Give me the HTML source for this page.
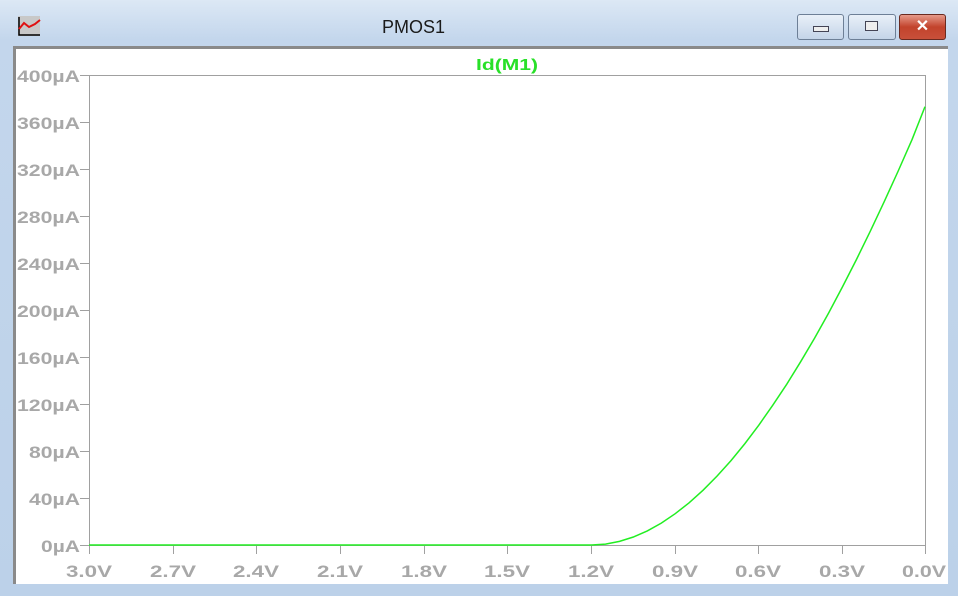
<!DOCTYPE html>
<html><head><meta charset="utf-8"><style>
body{margin:0;width:958px;height:596px;overflow:hidden;background:#c9dbee;font-family:"Liberation Sans",sans-serif}
.frame{position:absolute;left:0;top:0;width:958px;height:596px;background:linear-gradient(#dce8f5,#c3d6ec 40px,#bcd1e9);}
.title{position:absolute;left:382px;top:17px;font-size:18px;color:#1a1a1a}
.btn{position:absolute;top:14px;height:24px;border:1px solid #6d7f96;border-radius:3px;background:linear-gradient(#e9f0f8,#c4d4e8)}
.client{position:absolute;left:13px;top:46px;width:935px;height:538px;background:#fff;border-top:3px solid #8a8a8a;border-left:3px solid #8a8a8a;box-sizing:border-box}
svg{position:absolute;left:0;top:0}
</style></head><body>
<div class="frame"></div>
<svg width="30" height="30" style="left:16px;top:14px"><rect x="2" y="2" width="22" height="20" fill="#c8c8c8"/><path d="M3 3V21H24" stroke="#000" fill="none" stroke-width="1.5"/><path d="M3 15l5-6 5 4 6-3 5-4" stroke="#e01010" stroke-width="2" fill="none"/></svg>
<div class="title">PMOS1</div>
<div class="btn" style="left:797px;width:45px"><div style="position:absolute;left:15px;top:11px;width:14px;height:4px;background:#eee;border:1px solid #445"></div></div>
<div class="btn" style="left:848px;width:46px"><div style="position:absolute;left:16px;top:6px;width:11px;height:8px;background:#eee;border:1px solid #445"></div></div>
<div class="btn" style="left:899px;width:45px;background:linear-gradient(#e69a8a,#c2432c 50%,#c8503a);border-color:#6a2a20;color:#fff;font-weight:bold;font-size:16px;text-align:center;line-height:24px">✕</div>
<div class="client"></div>
<svg width="958" height="596" font-family="Liberation Sans" font-size="17" font-weight="bold" fill="#a8a8a8">
<rect x="89.5" y="75.5" width="836" height="470" fill="none" stroke="#a0a0a0"/>
<text x="476" y="70" fill="#28e028" font-size="16" textLength="62" lengthAdjust="spacingAndGlyphs">Id(M1)</text>
<g stroke="#a0a0a0" stroke-width="1">
<path d="M80 75.5H89M80 122.5H89M80 169.5H89M80 216.5H89M80 263.5H89M80 310.5H89M80 357.5H89M80 404.5H89M80 451.5H89M80 498.5H89M80 545.5H89"/>
<path d="M89.5 545V554M173.5 545V554M256.5 545V554M340.5 545V554M424.5 545V554M507.5 545V554M591.5 545V554M675.5 545V554M758.5 545V554M842.5 545V554M925.5 545V554"/>
</g>
<g lengthAdjust="spacingAndGlyphs">
<text x="17" y="82" textLength="63" lengthAdjust="spacingAndGlyphs">400µA</text>
<text x="17" y="129" textLength="63" lengthAdjust="spacingAndGlyphs">360µA</text>
<text x="17" y="176" textLength="63" lengthAdjust="spacingAndGlyphs">320µA</text>
<text x="17" y="223" textLength="63" lengthAdjust="spacingAndGlyphs">280µA</text>
<text x="17" y="270" textLength="63" lengthAdjust="spacingAndGlyphs">240µA</text>
<text x="17" y="317" textLength="63" lengthAdjust="spacingAndGlyphs">200µA</text>
<text x="17" y="364" textLength="63" lengthAdjust="spacingAndGlyphs">160µA</text>
<text x="17" y="411" textLength="63" lengthAdjust="spacingAndGlyphs">120µA</text>
<text x="29" y="458" textLength="51" lengthAdjust="spacingAndGlyphs">80µA</text>
<text x="29" y="505" textLength="51" lengthAdjust="spacingAndGlyphs">40µA</text>
<text x="41" y="552" textLength="39" lengthAdjust="spacingAndGlyphs">0µA</text>
</g>
<g>
<text x="66" y="577" textLength="46" lengthAdjust="spacingAndGlyphs">3.0V</text>
<text x="150" y="577" textLength="46" lengthAdjust="spacingAndGlyphs">2.7V</text>
<text x="233" y="577" textLength="46" lengthAdjust="spacingAndGlyphs">2.4V</text>
<text x="317" y="577" textLength="46" lengthAdjust="spacingAndGlyphs">2.1V</text>
<text x="401" y="577" textLength="46" lengthAdjust="spacingAndGlyphs">1.8V</text>
<text x="484" y="577" textLength="46" lengthAdjust="spacingAndGlyphs">1.5V</text>
<text x="568" y="577" textLength="46" lengthAdjust="spacingAndGlyphs">1.2V</text>
<text x="652" y="577" textLength="46" lengthAdjust="spacingAndGlyphs">0.9V</text>
<text x="735" y="577" textLength="46" lengthAdjust="spacingAndGlyphs">0.6V</text>
<text x="819" y="577" textLength="46" lengthAdjust="spacingAndGlyphs">0.3V</text>
<text x="902" y="577" textLength="44" lengthAdjust="spacingAndGlyphs">0.0V</text>
</g>
<polyline fill="none" stroke="#22ee22" stroke-width="1.5" points="89,545 591.6,545 605.5,544.1 619.5,541.4 633.4,537 647.3,530.9 661.3,523.1 675.2,513.7 689.1,502.8 703.1,490.2 717,476.1 731,460.6 744.9,443.6 758.8,425.2 772.7,405.3 786.7,384.3 800.6,361.8 814.6,338.1 828.5,313.2 842.4,287 856.4,259.6 870.3,231.2 884.2,201.7 898.2,171 912.1,139.4 925,106.7"/>
</svg>
</body></html>
